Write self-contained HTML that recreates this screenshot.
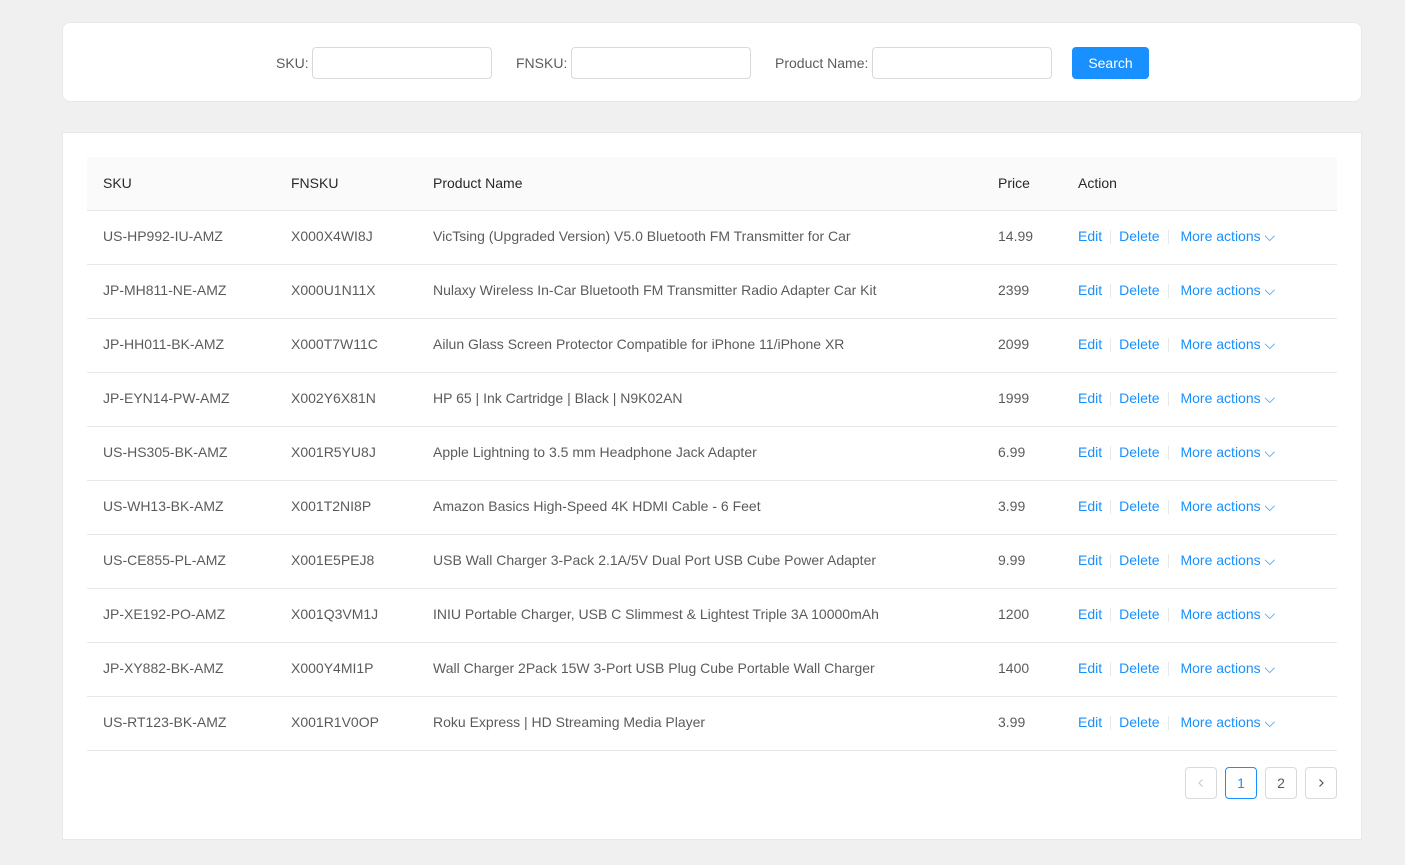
<!DOCTYPE html>
<html><head><style>
*{box-sizing:border-box;margin:0;padding:0}
body{width:1405px;height:865px;background:#f0f0f0;font-family:"Liberation Sans",sans-serif;font-size:14px;color:rgba(0,0,0,.65);position:relative;overflow:hidden}
.card1{position:absolute;left:62px;top:22px;width:1300px;height:80px;background:#fff;border:1px solid #e8e8e8;border-radius:8px}
.lbl{position:absolute;top:32px;color:rgba(0,0,0,.65)}
.inp{position:absolute;top:24px;width:180px;height:32px;border:1px solid #d9d9d9;border-radius:4px;background:#fff}
.btn{position:absolute;left:1009px;top:24px;width:77px;height:32px;background:#1890ff;color:#fff;border-radius:4px;text-align:center;line-height:32px}
.card2{position:absolute;left:62px;top:132px;width:1300px;height:708px;background:#fff;border:1px solid #e8e8e8}
table{position:absolute;left:24px;top:24px;width:1250px;border-collapse:collapse}
th{background:#fafafa;font-weight:normal;color:rgba(0,0,0,.85);text-align:left;height:53px;border-bottom:1px solid #e8e8e8;padding-left:16px;padding-bottom:1px}
td{height:54px;border-bottom:1px solid #e8e8e8;padding-left:16px;white-space:nowrap;padding-bottom:2px}
a{color:#1890ff;text-decoration:none}
.sep{display:inline-block;width:1px;height:14px;background:#e8e8e8;vertical-align:middle;margin:0 8px}
.pg{position:absolute;top:634px;width:32px;height:32px;border:1px solid #d9d9d9;border-radius:4px;text-align:center;line-height:30px;background:#fff}
.pg svg{position:absolute;left:10px;top:10px}
</style></head><body>
<div class="card1">
<span class="lbl" style="left:213px">SKU:</span><div class="inp" style="left:249px"></div>
<span class="lbl" style="left:453px">FNSKU:</span><div class="inp" style="left:508px"></div>
<span class="lbl" style="left:712px">Product Name:</span><div class="inp" style="left:809px"></div>
<div class="btn">Search</div>
</div>
<div class="card2">
<table>
<tr style="height:53px"><th style="width:188px">SKU</th><th style="width:142px">FNSKU</th><th style="width:565px">Product Name</th><th style="width:80px">Price</th><th>Action</th></tr>
<tr><td>US-HP992-IU-AMZ</td><td>X000X4WI8J</td><td>VicTsing (Upgraded Version) V5.0 Bluetooth FM Transmitter for Car</td><td>14.99</td><td><a>Edit</a><span class="sep"></span><a>Delete</a><span class="sep"></span> <a>More actions ⌵</a></td></tr>
<tr><td>JP-MH811-NE-AMZ</td><td>X000U1N11X</td><td>Nulaxy Wireless In-Car Bluetooth FM Transmitter Radio Adapter Car Kit</td><td>2399</td><td><a>Edit</a><span class="sep"></span><a>Delete</a><span class="sep"></span> <a>More actions ⌵</a></td></tr>
<tr><td>JP-HH011-BK-AMZ</td><td>X000T7W11C</td><td>Ailun Glass Screen Protector Compatible for iPhone 11/iPhone XR</td><td>2099</td><td><a>Edit</a><span class="sep"></span><a>Delete</a><span class="sep"></span> <a>More actions ⌵</a></td></tr>
<tr><td>JP-EYN14-PW-AMZ</td><td>X002Y6X81N</td><td>HP 65 | Ink Cartridge | Black | N9K02AN</td><td>1999</td><td><a>Edit</a><span class="sep"></span><a>Delete</a><span class="sep"></span> <a>More actions ⌵</a></td></tr>
<tr><td>US-HS305-BK-AMZ</td><td>X001R5YU8J</td><td>Apple Lightning to 3.5 mm Headphone Jack Adapter</td><td>6.99</td><td><a>Edit</a><span class="sep"></span><a>Delete</a><span class="sep"></span> <a>More actions ⌵</a></td></tr>
<tr><td>US-WH13-BK-AMZ</td><td>X001T2NI8P</td><td>Amazon Basics High-Speed 4K HDMI Cable - 6 Feet</td><td>3.99</td><td><a>Edit</a><span class="sep"></span><a>Delete</a><span class="sep"></span> <a>More actions ⌵</a></td></tr>
<tr><td>US-CE855-PL-AMZ</td><td>X001E5PEJ8</td><td>USB Wall Charger 3-Pack 2.1A/5V Dual Port USB Cube Power Adapter</td><td>9.99</td><td><a>Edit</a><span class="sep"></span><a>Delete</a><span class="sep"></span> <a>More actions ⌵</a></td></tr>
<tr><td>JP-XE192-PO-AMZ</td><td>X001Q3VM1J</td><td>INIU Portable Charger, USB C Slimmest &amp; Lightest Triple 3A 10000mAh</td><td>1200</td><td><a>Edit</a><span class="sep"></span><a>Delete</a><span class="sep"></span> <a>More actions ⌵</a></td></tr>
<tr><td>JP-XY882-BK-AMZ</td><td>X000Y4MI1P</td><td>Wall Charger 2Pack 15W 3-Port USB Plug Cube Portable Wall Charger</td><td>1400</td><td><a>Edit</a><span class="sep"></span><a>Delete</a><span class="sep"></span> <a>More actions ⌵</a></td></tr>
<tr><td>US-RT123-BK-AMZ</td><td>X001R1V0OP</td><td>Roku Express | HD Streaming Media Player</td><td>3.99</td><td><a>Edit</a><span class="sep"></span><a>Delete</a><span class="sep"></span> <a>More actions ⌵</a></td></tr>
</table>
<div class="pg" style="left:1122px"><svg width="10" height="10" viewBox="0 0 10 10"><path d="M6.5 1.5L3 5l3.5 3.5" fill="none" stroke="#ccc" stroke-width="1.2"/></svg></div>
<div class="pg" style="left:1162px;border-color:#1890ff;color:#1890ff">1</div>
<div class="pg" style="left:1202px">2</div>
<div class="pg" style="left:1242px"><svg width="10" height="10" viewBox="0 0 10 10"><path d="M3.5 1.5L7 5 3.5 8.5" fill="none" stroke="#555" stroke-width="1.2"/></svg></div>
</div>
</body></html>
